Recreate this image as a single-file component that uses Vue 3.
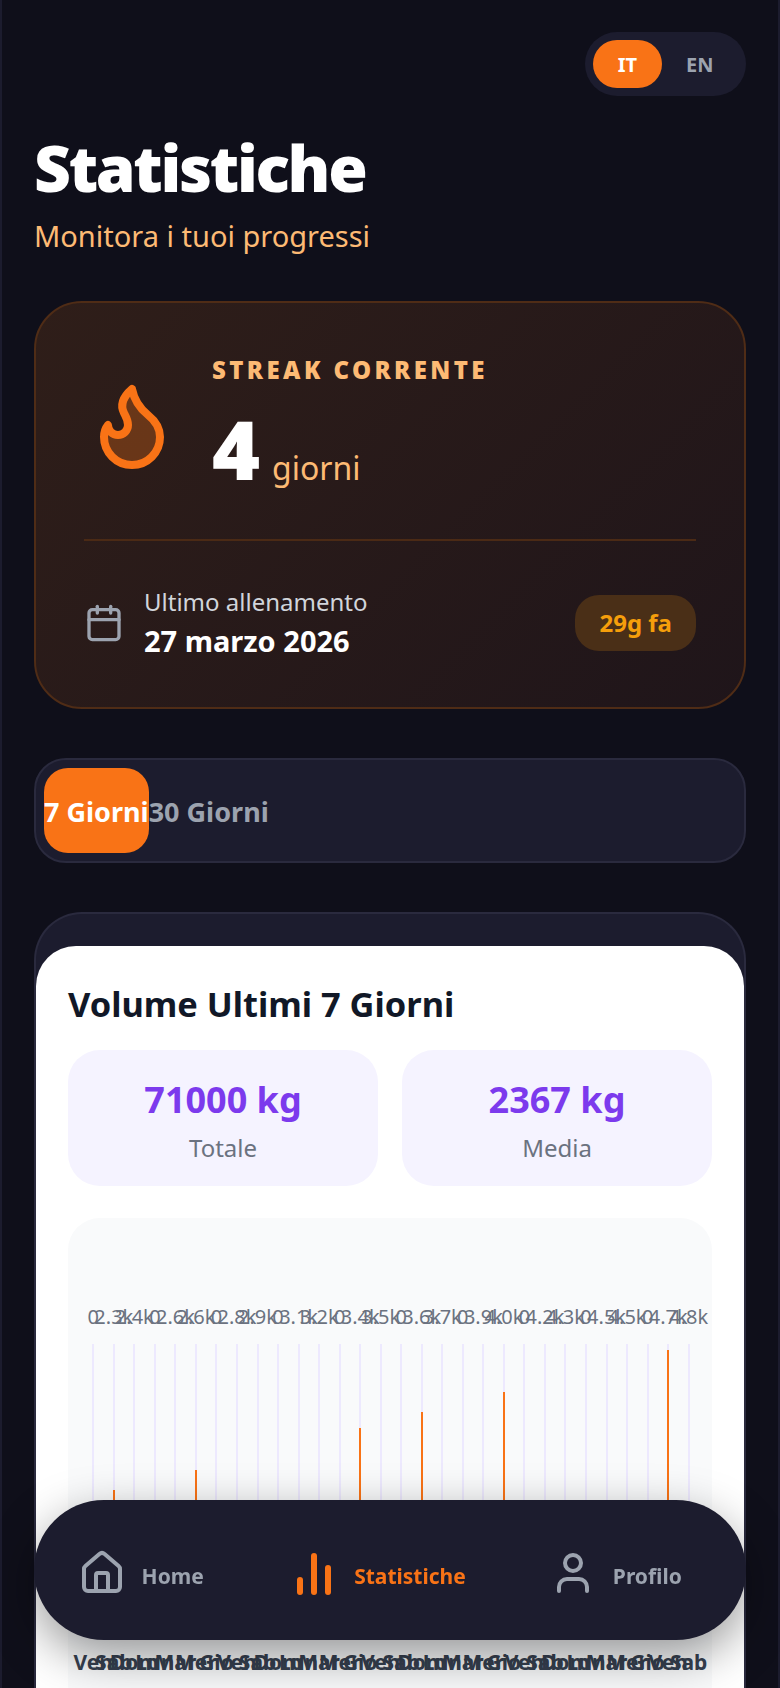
<template>
  <div class="app">
    <div class="lang-row">
      <div class="lang-toggle">
        <button class="lang-btn active">IT</button>
        <button class="lang-btn">EN</button>
      </div>
    </div>

    <header class="page-head">
      <h1>Statistiche</h1>
      <p>Monitora i tuoi progressi</p>
    </header>

    <section class="streak-card">
      <div class="streak-top">
        <svg class="flame" viewBox="0 0 24 24" fill="rgba(249,115,22,0.3)" stroke="#f97316" stroke-width="2" stroke-linecap="round" stroke-linejoin="round">
          <path d="M8.5 14.5A2.5 2.5 0 0 0 11 12c0-1.38-.5-2-1-3-1.072-2.143-.224-4.054 2-6 .5 2.5 2 4.9 4 6.5 2 1.6 3 3.5 3 5.5a7 7 0 1 1-14 0c0-1.153.433-2.294 1-3a2.5 2.5 0 0 0 2.5 2.5z" />
        </svg>
        <div class="streak-info">
          <div class="streak-label">STREAK CORRENTE</div>
          <div class="streak-value"><span class="num">4</span><span class="unit">giorni</span></div>
        </div>
      </div>
      <div class="streak-bottom">
        <svg class="cal" viewBox="0 0 24 24" fill="none" stroke="#9ca3af" stroke-width="2" stroke-linecap="round" stroke-linejoin="round">
          <path d="M8 2v4" />
          <path d="M16 2v4" />
          <rect x="3" y="4" width="18" height="18" rx="2" />
          <path d="M3 10h18" />
        </svg>
        <div class="last-info">
          <div class="last-label">Ultimo allenamento</div>
          <div class="last-date">27 marzo 2026</div>
        </div>
        <div class="badge">29g fa</div>
      </div>
    </section>

    <div class="tabs">
      <button class="tab active">7 Giorni</button>
      <button class="tab">30 Giorni</button>
    </div>

    <section class="chart-card">
      <div class="chart-inner">
        <h2>Volume Ultimi 7 Giorni</h2>
        <div class="stats">
          <div class="stat">
            <div class="stat-value">71000 kg</div>
            <div class="stat-label">Totale</div>
          </div>
          <div class="stat">
            <div class="stat-value">2367 kg</div>
            <div class="stat-label">Media</div>
          </div>
        </div>
        <div class="chart">
          <div v-for="(col, i) in columns" :key="i" class="col">
            <span class="col-value">{{ col.label }}</span>
            <div class="track">
              <div class="bar" :style="{ height: col.pct + '%' }"></div>
            </div>
            <span class="col-day">{{ col.day }}</span>
          </div>
        </div>
      </div>
    </section>

    <nav class="bottom-nav">
      <a class="nav-item">
        <svg viewBox="0 0 24 24" fill="none" stroke="#9ca3af" stroke-width="2" stroke-linecap="round" stroke-linejoin="round">
          <path d="M15 21v-8a1 1 0 0 0-1-1h-4a1 1 0 0 0-1 1v8" />
          <path d="M3 10a2 2 0 0 1 .709-1.528l7-5.999a2 2 0 0 1 2.582 0l7 5.999A2 2 0 0 1 21 10v9a2 2 0 0 1-2 2H5a2 2 0 0 1-2-2z" />
        </svg>
        <span>Home</span>
      </a>
      <a class="nav-item active">
        <svg viewBox="0 0 48 48" fill="none" stroke="#f97316" stroke-width="6" stroke-linecap="round">
          <path d="M10 31v12" />
          <path d="M24 7v36" />
          <path d="M38 19v24" />
        </svg>
        <span>Statistiche</span>
      </a>
      <a class="nav-item">
        <svg viewBox="0 0 24 24" fill="none" stroke="#9ca3af" stroke-width="2" stroke-linecap="round" stroke-linejoin="round">
          <path d="M19 21v-2a4 4 0 0 0-4-4H9a4 4 0 0 0-4 4v2" />
          <circle cx="12" cy="7" r="4" />
        </svg>
        <span>Profilo</span>
      </a>
    </nav>
  </div>
</template>

<script setup>
const labels = [
  '0', '2.3k', '2.4k', '0', '2.6k', '2.6k', '0', '2.8k', '2.9k', '0',
  '3.1k', '3.2k', '0', '3.4k', '3.5k', '0', '3.6k', '3.7k', '0', '3.9k',
  '4.0k', '0', '4.2k', '4.3k', '0', '4.5k', '4.5k', '0', '4.7k', '4.8k'
];
const days = ['Ven', 'Sab', 'Dom', 'Lun', 'Mar', 'Mer', 'Gio'];
const heights = { 1: 134, 5: 154, 13: 196, 16: 212, 20: 232, 28: 274 };

const columns = labels.map((label, i) => ({
  label,
  day: days[i % 7],
  pct: heights[i] ? (heights[i] / 280) * 100 : 0
}));
</script>

<style>
html, body {
  height: 100%;
  overflow: hidden;
  background: #0f0f1a;
}
</style>

<style scoped>
.app {
  box-sizing: border-box;
  min-height: 1688px;
  padding: 32px 32px 200px;
  background: #0f0f1a;
  border-left: 2px solid #1c1c2e;
  border-right: 2px solid #1c1c2e;
  font-family: "Noto Sans", "Open Sans", sans-serif;
  color: #fff;
}

button {
  font-family: inherit;
  border: none;
  background: none;
  cursor: pointer;
}

.lang-row {
  display: flex;
  justify-content: flex-end;
}

.lang-toggle {
  display: flex;
  padding: 8px;
  background: #1c1c2e;
  border-radius: 32px;
}

.lang-btn {
  height: 48px;
  padding: 0 24.5px;
  border-radius: 24px;
  font-size: 20px;
  font-weight: 700;
  color: #9ca3af;
}

.lang-btn.active {
  background: #f97316;
  color: #fff;
}

.page-head {
  margin-top: 32px;
}

.page-head h1 {
  margin: 0;
  font-size: 64px;
  line-height: 80px;
  font-weight: 900;
  letter-spacing: -2.3px;
  color: #fff;
}

.page-head p {
  margin: 8px 0 0;
  font-size: 29px;
  line-height: 40px;
  color: #fdba74;
}

.streak-card {
  box-sizing: border-box;
  margin-top: 45px;
  height: 408px;
  padding: 48px;
  border: 2px solid #4f2c16;
  border-radius: 48px;
  background: linear-gradient(135deg, #2f1e19, #1f151a);
}

.streak-top {
  display: flex;
  align-items: center;
  gap: 32px;
  padding: 3px 0 43px;
  border-bottom: 2px solid #4b2a15;
}

.flame {
  width: 96px;
  height: 96px;
  flex-shrink: 0;
}

.streak-label {
  font-size: 24px;
  line-height: 32px;
  font-weight: 900;
  letter-spacing: 3.4px;
  color: #fdba74;
}

.streak-value {
  display: flex;
  align-items: baseline;
  gap: 12px;
  margin-top: 14px;
}

.num {
  font-size: 82px;
  line-height: 96px;
  font-weight: 900;
  color: #fff;
}

.unit {
  font-size: 32px;
  color: #fdba74;
}

.streak-bottom {
  display: flex;
  align-items: center;
  margin-top: 43px;
}

.cal {
  width: 40px;
  height: 40px;
  flex-shrink: 0;
  margin-right: 20px;
}

.last-info {
  flex: 1;
}

.last-label {
  font-size: 24px;
  line-height: 36px;
  color: #d1d5db;
}

.last-date {
  font-size: 29px;
  line-height: 42px;
  font-weight: 700;
  color: #fff;
}

.badge {
  height: 56px;
  line-height: 56px;
  padding: 0 24px;
  border-radius: 24px;
  background: #4a2f17;
  color: #f59e0b;
  font-size: 24px;
  font-weight: 700;
}

.tabs {
  box-sizing: border-box;
  display: flex;
  height: 105px;
  margin-top: 49px;
  padding: 8px;
  background: #1c1c2e;
  border: 2px solid #2a2a3e;
  border-radius: 32px;
}

.tab {
  padding: 2px 0 0;
  font-size: 27px;
  font-weight: 700;
  color: #9ca3af;
  border-radius: 24px;
}

.tab.active {
  background: #f97316;
  color: #fff;
}

.chart-card {
  margin-top: 49px;
  padding-top: 32px;
  background: #1c1c2e;
  border: 2px solid #2a2a3e;
  border-bottom: none;
  border-radius: 48px 48px 0 0;
}

.chart-inner {
  padding: 32px;
  background: #fff;
  border-radius: 40px 40px 0 0;
}

.chart-inner h2 {
  margin: 2px 0 -2px;
  font-size: 34.4px;
  line-height: 48px;
  font-weight: 700;
  color: #111827;
}

.stats {
  display: grid;
  grid-template-columns: 1fr 1fr;
  gap: 24px;
  margin-top: 24px;
}

.stat {
  height: 136px;
  padding-top: 26px;
  box-sizing: border-box;
  border-radius: 32px;
  background: #f5f3ff;
  text-align: center;
}

.stat-value {
  font-size: 36px;
  line-height: 48px;
  font-weight: 700;
  color: #7c3aed;
}

.stat-label {
  margin-top: 8px;
  font-size: 24px;
  line-height: 32px;
  color: #6b7280;
}

.chart {
  display: flex;
  margin-top: 32px;
  padding: 85px 13px 60px 15px;
  background: #f9fafb;
  border-radius: 32px;
}

.col {
  flex: 1;
  min-width: 0;
  display: flex;
  flex-direction: column;
  align-items: center;
}

.col-value {
  font-size: 20px;
  line-height: 28px;
  color: #6b7280;
  white-space: nowrap;
}

.track {
  position: relative;
  width: 2px;
  height: 280px;
  margin-top: 13px;
  background: #ede9fe;
}

.bar {
  position: absolute;
  left: 0;
  right: 0;
  bottom: 0;
  background: #f97316;
}

.col-day {
  margin-top: 24px;
  font-size: 21px;
  line-height: 28px;
  font-weight: 700;
  color: #374151;
  white-space: nowrap;
}

.bottom-nav {
  position: fixed;
  left: 34px;
  bottom: 48px;
  width: 712px;
  height: 140px;
  display: flex;
  padding-top: 6px;
  box-sizing: border-box;
  background: #1c1c2e;
  border-radius: 70px;
  box-shadow: 0 16px 48px rgba(0, 0, 0, 0.4);
}

.nav-item {
  flex: 1;
  display: flex;
  align-items: center;
  justify-content: center;
  gap: 16px;
  padding-right: 24px;
  font-size: 21px;
  font-weight: 700;
  color: #9ca3af;
}

.nav-item span {
  margin-top: 6px;
}

.nav-item svg {
  width: 48px;
  height: 48px;
  flex-shrink: 0;
}

.nav-item.active {
  color: #f97316;
}
</style>
